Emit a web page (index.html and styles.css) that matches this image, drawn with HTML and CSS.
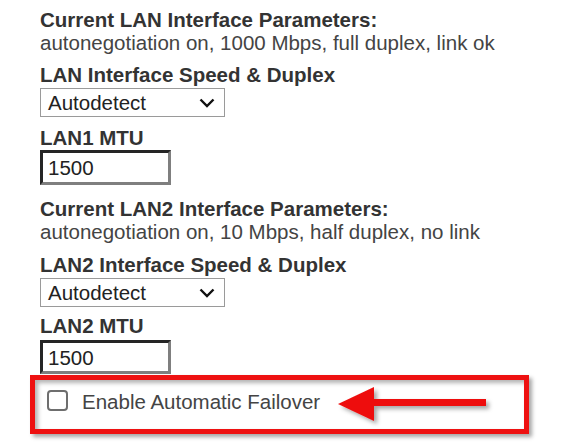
FILE: index.html
```html
<!DOCTYPE html>
<html>
<head>
<meta charset="utf-8">
<link rel="stylesheet" href="styles.css">
</head>
<body>
<div class="page">
  <div class="group first">
    <div class="label">Current LAN Interface Parameters:</div>
    <div class="info">autonegotiation on, 1000 Mbps, full duplex, link ok</div>
  </div>
  <div class="group g-sel1">
    <div class="label">LAN Interface Speed &amp; Duplex</div>
    <div class="select"><span>Autodetect</span>
      <svg class="chev" width="16" height="10" viewBox="0 0 16 10"><path d="M1.5 1.5 L8 8 L14.5 1.5" fill="none" stroke="#111" stroke-width="2.4"/></svg>
    </div>
  </div>
  <div class="group g-mtu1">
    <div class="label">LAN1 MTU</div>
    <div class="input">1500</div>
  </div>
  <div class="group g-cur2">
    <div class="label">Current LAN2 Interface Parameters:</div>
    <div class="info">autonegotiation on, 10 Mbps, half duplex, no link</div>
  </div>
  <div class="group g-sel2">
    <div class="label">LAN2 Interface Speed &amp; Duplex</div>
    <div class="select"><span>Autodetect</span>
      <svg class="chev" width="16" height="10" viewBox="0 0 16 10"><path d="M1.5 1.5 L8 8 L14.5 1.5" fill="none" stroke="#111" stroke-width="2.4"/></svg>
    </div>
  </div>
  <div class="group g-mtu2">
    <div class="label">LAN2 MTU</div>
    <div class="input input2">1500</div>
  </div>
  <div class="annot">
    <span class="check"></span>
    <span class="cblabel">Enable Automatic Failover</span>
    <svg class="arrow" width="170" height="50" viewBox="0 0 170 50">
      <defs>
        <filter id="sh" x="-10%" y="-20%" width="130%" height="160%">
          <feDropShadow dx="3" dy="3" stdDeviation="2" flood-color="#000" flood-opacity="0.35"/>
        </filter>
      </defs>
      <path d="M2 21 L38 4 L38 16 L150 16 L150 23 L38 23 L38 38 Z" fill="#ee1111" filter="url(#sh)"/>
    </svg>
  </div>
</div>
</body>
</html>
```

FILE: styles.css
```css
html, body {
  margin: 0;
  padding: 0;
  background: #fff;
}
.page {
  width: 568px;
  height: 442px;
  overflow: hidden;
  padding: 8px 0 0 40px;
  box-sizing: border-box;
  font-family: "Liberation Sans", Arial, sans-serif;
  font-size: 20.5px;
  line-height: 23px;
  color: #333;
  display: flex;
  flex-direction: column;
}
.group {
  display: flex;
  flex-direction: column;
  align-items: flex-start;
}
.g-sel1 { margin-top: 9px; }
.g-mtu1 { margin-top: 9px; }
.g-cur2 { margin-top: 12px; }
.g-sel2 { margin-top: 10px; }
.g-mtu2 { margin-top: 7px; }
.label {
  font-weight: bold;
  color: #333;
}
.info {
  color: #444;
}
.select {
  margin-top: 2px;
  width: 185px;
  height: 29px;
  box-sizing: border-box;
  border: 1px solid #9a9a9a;
  display: flex;
  align-items: center;
  justify-content: space-between;
  padding: 0 9px 0 7px;
  color: #222;
}
.chev {
  display: block;
}
.input {
  margin-top: 1px;
  width: 131px;
  height: 35px;
  box-sizing: border-box;
  border-style: solid;
  border-width: 3px;
  border-color: #252525 #7f7f7f #7f7f7f #252525;
  padding: 0 0 0 5px;
  display: flex;
  align-items: center;
  color: #222;
}
.input2 {
  margin-top: 3px;
  height: 34px;
}
.annot {
  position: relative;
  margin: 1px 0 0 -10px;
  width: 499px;
  height: 59px;
  box-sizing: border-box;
  border: 5px solid #ee1111;
  box-shadow: 3px 3px 4px rgba(0, 0, 0, 0.35), inset 3px 3px 4px rgba(0, 0, 0, 0.3);
  display: flex;
  align-items: flex-start;
  padding: 10px 0 0 12px;
}
.check {
  width: 17px;
  height: 17px;
  border: 2px solid #6e6e6e;
  border-radius: 4px;
  background: #fff;
  flex: none;
}
.cblabel {
  margin: 1px 0 0 14px;
  color: #444;
  line-height: 21px;
}
.arrow {
  position: absolute;
  left: 301px;
  top: 3px;
}
```
